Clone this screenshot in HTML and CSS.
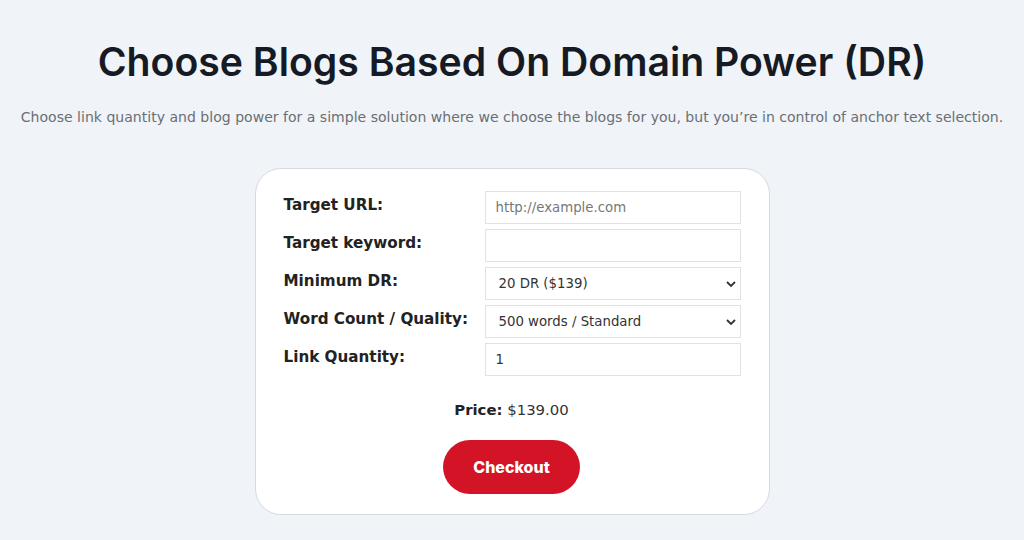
FILE: index.html
```html
<!DOCTYPE html>
<html lang="en">
  <head>
    <meta charset="UTF-8" />
    <meta name="viewport" content="width=device-width, initial-scale=1.0" />
    <title>Choose Blogs Based On Domain Power</title>
    <link rel="stylesheet" href="styles.css">
  </head>
  <body>
    <div class="page">
      <h1>Choose Blogs Based On Domain Power (DR)</h1>
      <p class="intro">
        Choose link quantity and blog power for a simple solution where we choose the blogs for you, but you’re in control of anchor text selection.
      </p>

      <div class="card">
        <form class="order-form">
          <label for="targetUrl">Target URL:</label>
          <input type="text" id="targetUrl" placeholder="http://example.com" />

          <label for="keyword">Target keyword:</label>
          <input type="text" id="keyword" />

          <label for="minDr">Minimum DR:</label>
          <div class="select-wrap">
            <select id="minDr">
              <option>20 DR ($139)</option>
              <option>30 DR ($189)</option>
              <option>40 DR ($249)</option>
            </select>
            <svg class="chevron" viewBox="0 0 10 6" width="10" height="6">
              <path d="M1 1l4 4 4-4" fill="none" stroke="#333" stroke-width="1.8" />
            </svg>
          </div>

          <label for="quality">Word Count / Quality:</label>
          <div class="select-wrap">
            <select id="quality">
              <option>500 words / Standard</option>
              <option>1000 words / Premium</option>
            </select>
            <svg class="chevron" viewBox="0 0 10 6" width="10" height="6">
              <path d="M1 1l4 4 4-4" fill="none" stroke="#333" stroke-width="1.8" />
            </svg>
          </div>

          <label for="qty">Link Quantity:</label>
          <input type="number" id="qty" value="1" />
        </form>

        <p class="price"><b>Price:</b> $139.00</p>
        <button class="checkout" type="button">Checkout</button>
      </div>
    </div>
  </body>
</html>
```

FILE: styles.css
```css
body {
  margin: 0;
  background: #f0f4f8;
  font-family: "DejaVu Sans", Verdana, sans-serif;
  color: #333;
}

.page {
  display: flex;
  flex-direction: column;
  align-items: center;
  padding-top: 38px;
}

h1 {
  margin: 0;
  font-family: Inter, "Noto Sans", sans-serif;
  font-weight: 600;
  font-size: 39.2px;
  line-height: 48px;
  color: #161a24;
}

.intro {
  margin: 22px 0 0;
  font-size: 14.05px;
  line-height: 18px;
  color: #6b6f75;
  white-space: nowrap;
}

.card {
  margin-top: 42px;
  width: 456px;
  padding: 22px 29px 20px 28px;
  background: #fff;
  border: 1px solid #d6d9dd;
  border-radius: 26px;
  display: flex;
  flex-direction: column;
  align-items: center;
}

.order-form {
  display: grid;
  grid-template-columns: 201px 256px;
  row-gap: 5px;
  width: 100%;
}

.order-form label {
  font-weight: bold;
  font-size: 15.2px;
  line-height: 18px;
  padding-top: 5px;
  color: #222;
  white-space: nowrap;
}

.order-form input,
.order-form select {
  box-sizing: border-box;
  width: 256px;
  height: 33px;
  border: 1px solid #e2e2e2;
  border-radius: 0;
  background: #fff;
  padding: 0 10px;
  font-family: "DejaVu Sans", Verdana, sans-serif;
  font-size: 13.3px;
  color: #333;
  outline: none;
}

.order-form input::placeholder {
  color: #777;
}

.order-form input[type="number"]::-webkit-inner-spin-button {
  -webkit-appearance: none;
}

.order-form select {
  -webkit-appearance: none;
  appearance: none;
  padding-left: 13px;
}

.select-wrap {
  position: relative;
}

.chevron {
  position: absolute;
  right: 5px;
  top: 14px;
  pointer-events: none;
}

.price {
  margin: 25px 0 0;
  font-size: 14.9px;
  line-height: 18px;
  color: #333;
}

.price b {
  color: #222;
}

.checkout {
  margin-top: 21px;
  width: 137px;
  height: 54px;
  border: none;
  border-radius: 27px;
  background: #d31426;
  color: #fff;
  font-family: Inter, "Noto Sans", sans-serif;
  font-weight: 800;
  font-size: 16px;
  cursor: pointer;
}
```
